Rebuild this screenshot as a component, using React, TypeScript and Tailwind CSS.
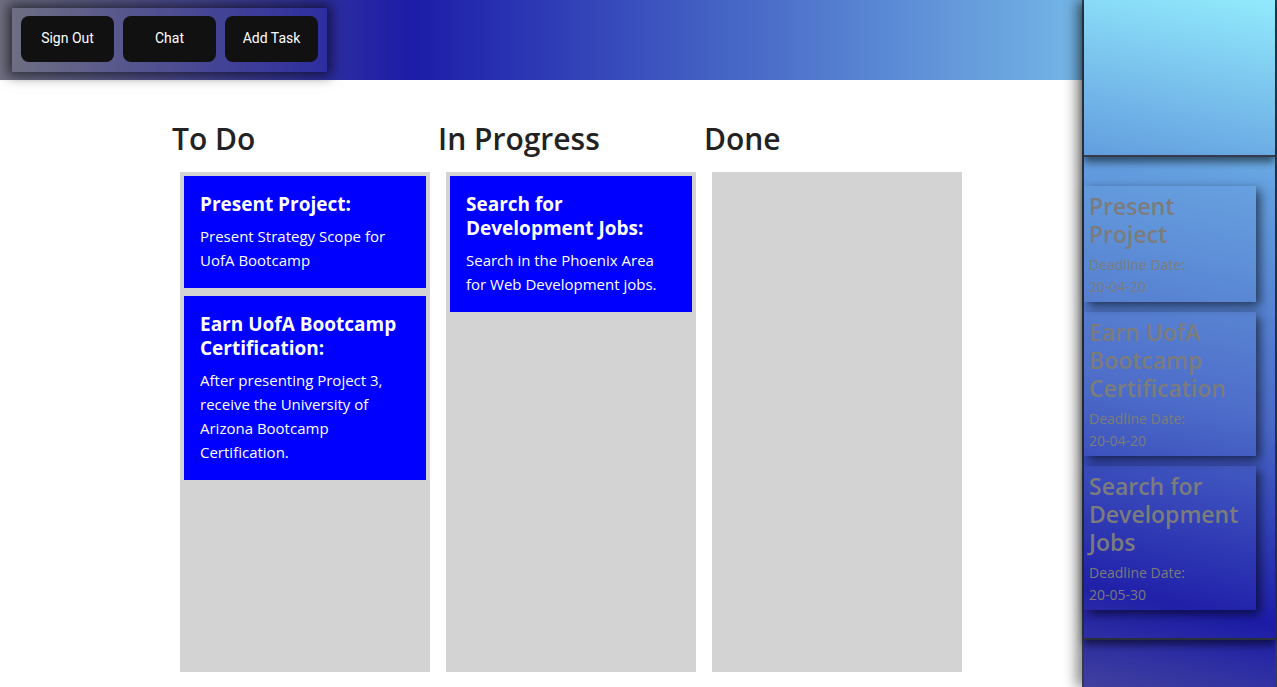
import React from "react";

type Task = { title: string; desc: string };

const columns: { name: string; tasks: Task[] }[] = [
  {
    name: "To Do",
    tasks: [
      { title: "Present Project:", desc: "Present Strategy Scope for UofA Bootcamp" },
      {
        title: "Earn UofA Bootcamp Certification:",
        desc: "After presenting Project 3, receive the University of Arizona Bootcamp Certification.",
      },
    ],
  },
  {
    name: "In Progress",
    tasks: [
      {
        title: "Search for Development Jobs:",
        desc: "Search in the Phoenix Area for Web Development jobs.",
      },
    ],
  },
  { name: "Done", tasks: [] },
];

const deadlines = [
  { title: "Present Project", date: "20-04-20" },
  { title: "Earn UofA Bootcamp Certification", date: "20-04-20" },
  { title: "Search for Development Jobs", date: "20-05-30" },
];

function NavButton({ label }: { label: string }) {
  return (
    <button className="w-[93px] h-[46px] rounded-lg bg-[#111111] text-white text-[14px] leading-[20px] pb-[3px] font-['Roboto',sans-serif]">
      {label}
    </button>
  );
}

export default function App() {
  return (
    <div className="flex h-screen w-full overflow-hidden bg-white font-['Open_Sans','Noto_Sans',sans-serif]">
      <div className="flex-1 flex flex-col min-w-0">
        <header className="h-[80px] shrink-0 bg-[linear-gradient(to_right,#707082_0%,#1c1ca8_38%,#74b6e6_100%)]">
          <div className="ml-[12px] mt-[8px] w-[315px] h-[64px] flex items-start gap-[9px] pt-[8px] px-[9px] shadow-[0_0_12px_4px_rgba(0,0,0,0.6)]">
            <NavButton label="Sign Out" />
            <NavButton label="Chat" />
            <NavButton label="Add Task" />
          </div>
        </header>

        <main className="flex pl-[172px] pt-[40px]">
          {columns.map((col) => (
            <section key={col.name} className="w-[266px]">
              <h2 className="text-[30px] leading-[38px] font-semibold text-[#222] mb-[14px]">{col.name}</h2>
              <div className="mx-2 w-[250px] h-[500px] bg-[#d3d3d3] p-1 flex flex-col gap-2">
                {col.tasks.map((t) => (
                  <div key={t.title} className="bg-[#0000ff] text-white px-4 py-4">
                    <h3 className="font-bold text-[19px] leading-[24px] mb-2">{t.title}</h3>
                    <p className="text-[15px] leading-[24px]">{t.desc}</p>
                  </div>
                ))}
              </div>
            </section>
          ))}
        </main>
      </div>

      <aside className="relative z-10 w-[195px] shrink-0 h-full flex flex-col border-x-2 border-[#333b4d] bg-[linear-gradient(12deg,#40409e_0%,#1c1ca8_14%,#4a6ac8_42%,#64a0e0_74%,#92eafc_100%)] shadow-[-6px_0_12px_rgba(0,0,0,0.45)]">
        <div className="relative z-20 h-[157px] shrink-0 border-b-2 border-[#333b4d] shadow-[0_5px_8px_rgba(0,0,0,0.55)]" />
        <div className="relative z-10 h-[483px] shrink-0 flex flex-col gap-[10px] pt-[29px] pr-[19px] border-b-2 border-[#2a2f40] shadow-[0_5px_8px_rgba(0,0,0,0.55)]">
          {deadlines.map((d) => (
            <div
              key={d.title}
              className="bg-[rgba(255,255,255,0.02)] px-[5px] pt-[6px] pb-[4px] shadow-[4px_4px_10px_rgba(0,0,0,0.6)] text-[#7c7c7c]"
            >
              <h4 className="font-semibold text-[23px] leading-[28px] mb-[6px]">{d.title}</h4>
              <p className="text-[14px] leading-[22px]">Deadline Date:</p>
              <p className="text-[14px] leading-[22px]">{d.date}</p>
            </div>
          ))}
        </div>
        <div className="flex-1" />
      </aside>
    </div>
  );
}
